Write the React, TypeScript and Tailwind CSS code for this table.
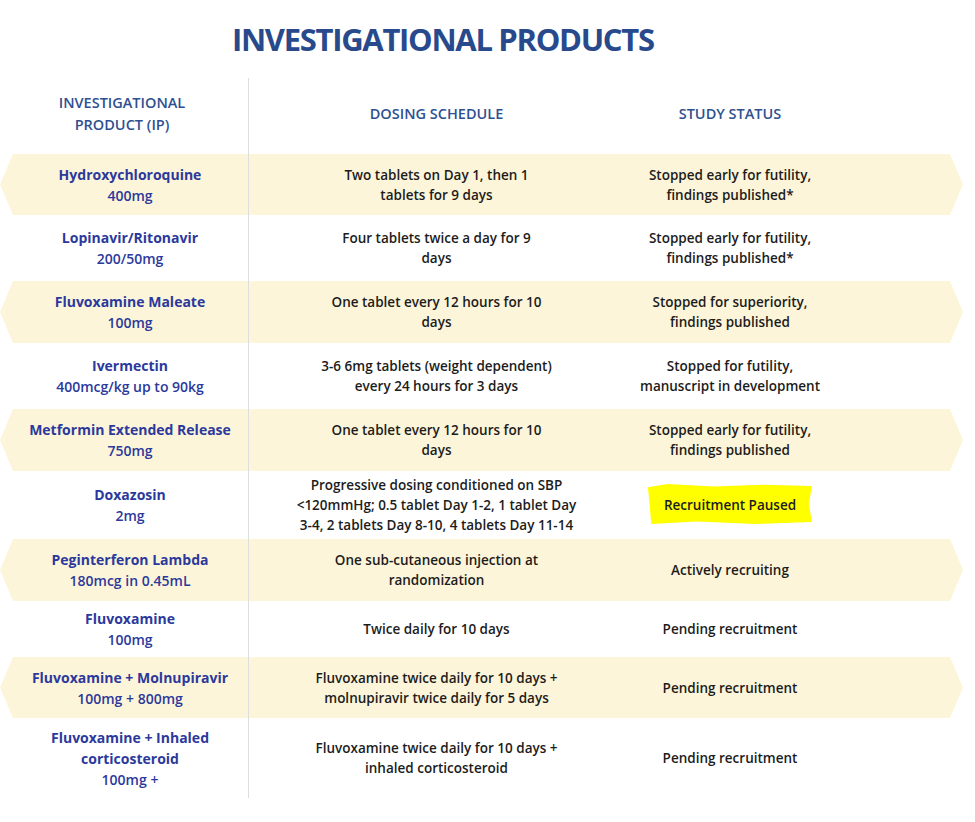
const rows = [
  {
    band: true,
    name: ["Hydroxychloroquine"],
    dose: "400mg",
    schedule: ["Two tablets on Day 1, then 1", "tablets for 9 days"],
    status: ["Stopped early for futility,", "findings published*"],
  },
  {
    band: false,
    name: ["Lopinavir/Ritonavir"],
    dose: "200/50mg",
    schedule: ["Four tablets twice a day for 9", "days"],
    status: ["Stopped early for futility,", "findings published*"],
  },
  {
    band: true,
    name: ["Fluvoxamine Maleate"],
    dose: "100mg",
    schedule: ["One tablet every 12 hours for 10", "days"],
    status: ["Stopped for superiority,", "findings published"],
  },
  {
    band: false,
    name: ["Ivermectin"],
    dose: "400mcg/kg up to 90kg",
    schedule: ["3-6 6mg tablets (weight dependent)", "every 24 hours for 3 days"],
    status: ["Stopped for futility,", "manuscript in development"],
  },
  {
    band: true,
    name: ["Metformin Extended Release"],
    dose: "750mg",
    schedule: ["One tablet every 12 hours for 10", "days"],
    status: ["Stopped early for futility,", "findings published"],
  },
  {
    band: false,
    name: ["Doxazosin"],
    dose: "2mg",
    schedule: [
      "Progressive dosing conditioned on SBP",
      "<120mmHg; 0.5 tablet Day 1-2, 1 tablet Day",
      "3-4, 2 tablets Day 8-10, 4 tablets Day 11-14",
    ],
    status: ["Recruitment Paused"],
    highlight: true,
  },
  {
    band: true,
    name: ["Peginterferon Lambda"],
    dose: "180mcg in 0.45mL",
    schedule: ["One sub-cutaneous injection at", "randomization"],
    status: ["Actively recruiting"],
  },
  {
    band: false,
    name: ["Fluvoxamine"],
    dose: "100mg",
    schedule: ["Twice daily for 10 days"],
    status: ["Pending recruitment"],
  },
  {
    band: true,
    name: ["Fluvoxamine + Molnupiravir"],
    dose: "100mg + 800mg",
    schedule: ["Fluvoxamine twice daily for 10 days +", "molnupiravir twice daily for 5 days"],
    status: ["Pending recruitment"],
  },
  {
    band: false,
    name: ["Fluvoxamine + Inhaled", "corticosteroid"],
    dose: "100mg +",
    schedule: ["Fluvoxamine twice daily for 10 days +", "inhaled corticosteroid"],
    status: ["Pending recruitment"],
  },
]

const heights = ["h-[61px]", "h-[66px]", "h-[62px]", "h-[66px]", "h-[62px]", "h-[68px]", "h-[62px]", "h-[56px]", "h-[61px]", "h-[80px]"]

function Lines({ lines }: { lines: string[] }) {
  return (
    <>
      {lines.map((l, i) => (
        <span key={i} className="block whitespace-nowrap">
          {l}
        </span>
      ))}
    </>
  )
}

export default function App() {
  return (
    <div className="w-[975px] h-[822px] bg-white font-['Open_Sans',sans-serif] overflow-hidden">
      <h1 className="pl-[232px] pt-[19px] h-[78px] text-[31px] leading-[40px] font-bold text-[#284a8c] tracking-[-1.3px]">
        INVESTIGATIONAL PRODUCTS
      </h1>

      <div className="w-[963px]">
        {/* header */}
        <div className="flex h-[76px] pb-[4px] text-[#2e5090] font-semibold text-[14.5px]">
          <div className="w-[248px] flex flex-col items-center justify-center leading-[22px] pr-[4px]">
            <span>INVESTIGATIONAL</span>
            <span>PRODUCT (IP)</span>
          </div>
          <div className="w-[376px] -mb-[4px] border-l-[1.5px] border-[#dedede] flex items-center justify-center pb-[4px]">
            DOSING SCHEDULE
          </div>
          <div className="w-[212px] flex items-center justify-center">STUDY STATUS</div>
        </div>

        {rows.map((r, i) => (
          <div
            key={i}
            className={`flex ${heights[i]} ${
              r.band
                ? "bg-[#fdf5d9] [clip-path:polygon(13px_0,950px_0,963px_50%,950px_100%,13px_100%,0_50%)]"
                : ""
            }`}
          >
            <div className="w-[248px] pl-[12px] flex flex-col items-center justify-center text-center text-[14px] leading-[21px] text-[#2c399c]">
              <span className="font-bold">
                <Lines lines={r.name} />
              </span>
              <span className="font-semibold">{r.dose}</span>
            </div>
            <div className="w-[376px] border-l-[1.5px] border-[#dedede] flex flex-col items-center justify-center text-center text-[13.5px] leading-[20px] font-semibold text-[#1c1c1c]">
              <Lines lines={r.schedule} />
            </div>
            <div className="w-[212px] flex flex-col items-center justify-center text-center text-[13.5px] leading-[20px] font-semibold text-[#1c1c1c]">
              {r.highlight ? (
                <span className="block bg-[#ffff00] px-[16px] pt-[11px] pb-[9px] -mt-[2px] [clip-path:polygon(0_8%,12%_0,40%_6%,70%_2%,100%_5%,98%_50%,100%_95%,65%_100%,30%_94%,2%_100%,1%_50%)]">
                  Recruitment Paused
                </span>
              ) : (
                <Lines lines={r.status} />
              )}
            </div>
          </div>
        ))}
      </div>
    </div>
  )
}
